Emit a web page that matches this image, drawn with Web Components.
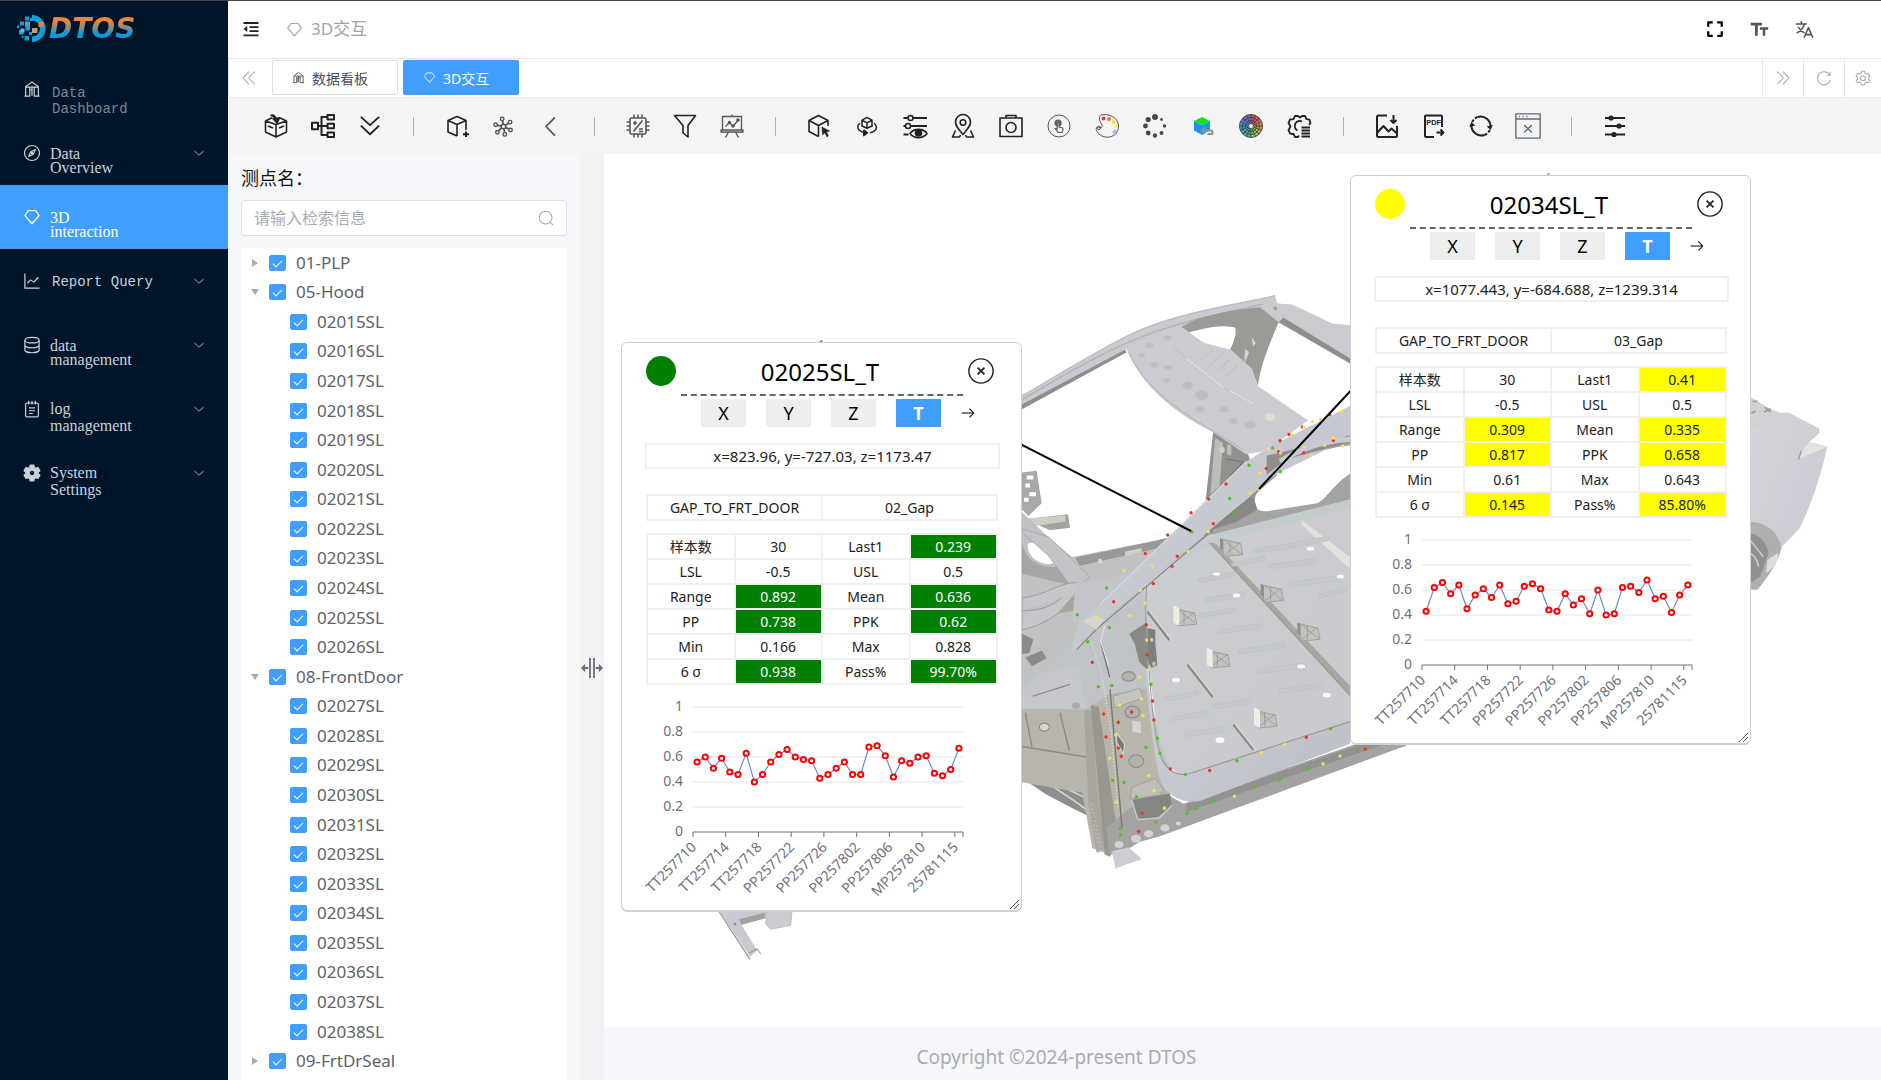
<!DOCTYPE html>
<html lang="zh-CN">
<head>
<meta charset="utf-8">
<meta name="viewport" content="width=device-width, initial-scale=1">
<title>DTOS</title>
<style>
html,body{margin:0;height:100%}
body{font-family:"Noto Sans","Noto Sans CJK SC",sans-serif;font-size:16px;color:#222;background:#fff;
--blue:#409eff;--navy:#001529;--line:#e4e7ed;--panel:#f5f7fa;--muted:#a8abb2;--text:#606266}
</style>
</head>
<body>
<dtos-app></dtos-app>
<script>
class Base extends HTMLElement{
  constructor(){super();this.attachShadow({mode:'open'});}
  render(css,html){this.shadowRoot.innerHTML='<style>*{box-sizing:border-box}button{font:inherit;border:0;background:none;padding:0;color:inherit;cursor:pointer}'+css+'</style>'+html;}
}

/* ---------- icons, all on a 24 x 24 grid ---------- */
const ICONS={
fold:'<g stroke-width="2.6"><path d="M2 4h20M10 9.5h12M10 14.8h12M2 20.5h20"/></g><path d="M2 12l5-4v8z" fill="currentColor" stroke="none"/>',
diamond:'<path d="M7 3.5h10l4.5 6.5L12 21 2.500 10z"/>',
bank:'<path d="M3.500 21.500V9L12 2.500 20.500 9v12.500M2 21.500h7V13h2.500M22 21.500h-7V11M3.500 9.500h17M9 21V10M15 10v4M12 10v11"/>',
compass:'<circle cx="12" cy="12" r="10"/><path d="M16.500 7.500l-2.800 6.200-6.200 2.800 2.800-6.200z"/><circle cx="12" cy="12" r=".8"/>',
trend:'<path d="M2.500 2v19.500H22M6 15l4-4.500 4.500 3 6-6.500"/>',
db:'<ellipse cx="12" cy="5.500" rx="9.500" ry="3.700"/><path d="M2.500 5.500v13c0 2 4 3.800 9.500 3.800s9.500-1.800 9.500-3.800v-13M2.500 12c0 2 4 3.800 9.500 3.800s9.500-1.800 9.500-3.800"/>',
note:'<rect x="3.500" y="4" width="17" height="18.500" rx="2"/><path d="M7.500 1v5M12 1v5M16.500 1v5M8 10.500h8M8 14.300h8M8 18h5"/>',
gear:'<path fill="currentColor" fill-rule="evenodd" d="M9.500 1.500h5l.6 3 2 1.100 2.900-1 2.500 4.300-2.300 2v2.200l2.300 2-2.500 4.300-2.900-1-2 1.100-.6 3h-5l-.6-3-2-1.100-2.900 1-2.500-4.300 2.300-2v-2.200l-2.300-2L4 4.600l2.900 1 2-1.100zM12 8.200a3.800 3.800 0 100 7.600 3.800 3.800 0 000-7.600z"/>',
gearline:'<path d="M9.800 2h4.400l.8 3 2.200 1.200 3-.8 2.200 3.800L20.200 11.400v1.800l2.200 2.200-2.200 3.800-3-.8L15 19.600l-.8 3H9.800l-.8-3-2.200-1.200-3 .8-2.200-3.800 2.200-2.200v-1.800L1.600 9.200 3.800 5.400l3 .8L9 5z"/><circle cx="12" cy="12.200" r="3.600"/>',
down:'<path d="M3 8l9 8.500L21 8" stroke-width="2"/>',
full:'<g stroke-width="3"><path d="M3 9V3h6M15 3h6v6M21 15v6h-6M9 21H3v-6"/></g>',
font:'<path fill="currentColor" stroke="none" d="M1 3.500h14v3.300H9.800V20H6.300V6.800H1zM12.500 9.200H23v3h-3.700V20h-3.200v-7.800h-3.600z"/>',
lang:'<g stroke-width="2"><path d="M1 5h14M8 1.500V5M4 8.500c2 4 5 6.500 8 8M12 5c-1 5-5 9-10 11.500M11.500 22.500L17 9.500l5.500 13M13.500 18.500h7"/></g>',
dleft:'<path d="M12 2.500L3 12l9 9.500M20.500 2.500l-9 9.500 9 9.500"/>',
dright:'<path d="M12 2.500l9 9.500-9 9.500M3.500 2.500l9 9.500-9 9.500"/>',
reload:'<path d="M20.500 7.500A9.800 9.800 0 1021.500 15M21 2.500v5.500h-5"/>',
search:'<circle cx="11.500" cy="11.500" r="9.500"/><path d="M18.500 18.500l4 4"/>',
boxin:'<path d="M12 10.500L1.500 7v11L12 23l10.500-5V7zM12 10.500V23M1.500 7L8 3.800M22.500 7L15 3.500M4 12l5 2M20 12l-5 2"/><path d="M6.500 1.500c3-1 5 0 5.500 4M9 4.500l4 4.500 2.500-5z" fill="currentColor"/>',
tree:'<g stroke-width="2"><path d="M7 12h10M10.500 12V3h6M10.500 12v9h6"/><rect x="1" y="8.800" width="6" height="6.400"/><rect x="16.500" y="1" width="6.500" height="4.600"/><rect x="16.500" y="9.700" width="6.500" height="4.600"/><rect x="16.500" y="18.400" width="6.500" height="4.600"/></g>',
ddown:'<g stroke-width="2"><path d="M2 2l10 9 10-9M2 11.500l10 9.500 10-9.500"/></g>',
boxplus:'<path d="M12 22L3 18V6.500l9-4 9 4V16M3 6.500l9 4 9-4M12 10.500V22"/><path d="M21 17.500v5.500M18 20.200h6" stroke-width="2"/>',
net:'<circle cx="12" cy="12" r="2.600"/><circle cx="10.500" cy="3.500" r="2"/><circle cx="19.500" cy="7" r="2"/><circle cx="20" cy="16" r="2"/><circle cx="13.500" cy="21" r="2"/><circle cx="5" cy="18.500" r="2"/><circle cx="3" cy="10" r="2"/><path d="M11.700 9.500l-.8-4M14.200 10.500l3.500-2.300M14.500 13l3.800 2.200M12.600 14.500l.6 4.500M9.800 13.500l-3.300 3.500M9.500 11.500L5 10.500" stroke-width="2"/>',
left:'<g stroke-width="2"><path d="M17 1.500L7 12l10 10.500"/></g>',
chip:'<rect x="4" y="4" width="16" height="16" rx="1.500"/><path d="M8 4V.5M12 4V.5M16 4V.5M8 23.500V20M12 23.500V20M16 23.500V20M4 8H.5M4 12H.5M4 16H.5M23.500 8H20M23.500 12H20M23.500 16H20M16.500 6.500l-9 11M7 9h4M9 7v4M13 15h4M13 17.500h4"/>',
filter:'<path d="M1.500 1.500h21l-7.500 10V23l-5-4v-7.500z"/>',
board:'<path d="M2.500 2.500h19v13.500h-19zM1 16h22v2H1zM12 .5v2M8.500 18L5.500 23.500M15.500 18l3 5.500M5.500 12.500l4-4 3.500 3.500 5.500-6" stroke-width="1.300"/><circle cx="9.500" cy="8.500" r="1"/><circle cx="13" cy="12" r="1"/><circle cx="18" cy="6" r="1"/>',
boxcur:'<path d="M11.500 22.500L2 17.500V6.500l9.500-5 9.500 5V12M2 6.500l9.500 5 9.500-5M11.500 11.500v11"/><path d="M15 13l7.500 4-3 1 2 4-1.600.8-2-4-2.400 2z" fill="currentColor" stroke-width=".6"/>',
boxrot:'<path d="M12 14.500L6.500 12V5.500L12 2.500l5.500 3V12zM6.500 5.500l5.500 3 5.500-3M12 8.500v6M4.500 9C0 12 1.500 18 10 19.500M19.500 9c5 3.500 3 9-4.500 10.500"/><path d="M8.500 16.500l4 3-4 3z" fill="currentColor"/>',
slidereye:'<path d="M.5 4h5M10 4h14M.5 12h2M8 12h16M.5 20.500h5" stroke-width="2"/><circle cx="7.500" cy="4" r="2.500"/><circle cx="5" cy="12" r="2.500"/><path d="M7 19.500c4-5.500 13-5.500 17 0-4 5.500-13 5.500-17 0z"/><circle cx="15.500" cy="19" r="3" fill="currentColor"/>',
pin:'<path d="M12 20.500C7 14.500 4.500 12 4.500 8a7.500 7.500 0 0115 0c0 4-2.500 6.500-7.500 12.500z"/><circle cx="12" cy="8.500" r="2.800"/><path d="M4.500 16.500L1.500 23h7l1-2M19.500 16.500l3 6.500h-7l-1-2"/>',
camera:'<path d="M1 4h22v18.500H1zM7 4V1.500h10V4"/><circle cx="12" cy="13.500" r="5"/>',
touch:'<g stroke-width="1"><circle cx="12" cy="12" r="11"/></g><circle cx="11" cy="9" r="3" fill="#777" stroke-width="1.200"/><path d="M10.200 8.500a.9.900 0 011.800 0V13l3.800 1c.6 2-.2 3.500-.8 4.500h-4l-2.800-4 2 .5z" fill="#f4f4f4" stroke-width="1.200"/>',
palette:'<path stroke="#555" stroke-width="1" d="M6 .8C14-.5 23 3 23.500 12c0 8-6 11-11 11.200C6.500 23.200 3 19.500 1.500 16.500c-1-3 .8-4 2.500-3 3 1.500 4-1.500 2.500-3.500C4.500 7.500 3.500 3 6 .8z"/><circle cx="3.800" cy="14" r="1.700" stroke="#555" stroke-width="1"/><g stroke="none"><circle cx="8.500" cy="4.500" r="1.900" fill="#f33"/><circle cx="14" cy="5" r="1.900" fill="#f63"/><circle cx="18.500" cy="8" r="1.900" fill="#fd3"/><circle cx="20.500" cy="12.500" r="1.700" fill="#ef5"/><circle cx="19.500" cy="17.500" r="1.900" fill="#a9b4ff"/></g>',
dots:'<g fill="#414b57" stroke="none"><circle cx="12" cy="3" r="3"/><circle cx="5.200" cy="5.500" r="2.600"/><circle cx="2.500" cy="12" r="2.400"/><circle cx="5.200" cy="19" r="2.400"/><circle cx="12" cy="21.500" r="2.200"/><circle cx="18.500" cy="19" r="2"/><circle cx="21.500" cy="12" r="1.700"/><circle cx="18.500" cy="5.500" r="1.400"/></g>',
cube:'<g stroke="none"><path d="M3 7l8-4 8 4-8 4.500z" fill="#14e01c"/><path d="M3 7v9.500l8 4.500V11.500z" fill="#1e8ff0"/><path d="M19 7v9l-8 5V11.500z" fill="#1699e8"/></g><path d="M11 16.500h8.500a2 2 0 012 2v1.500h-5M14 13.500l-3.500 3 3.500 3" stroke="#8b8f94" stroke-width="2"/>',
wheel:'<g stroke="none"><path d="M12 12V.5A11.500 11.500 0 0122 6.200z" fill="#e2504a"/><path d="M12 12L22 6.200a11.500 11.500 0 010 11.600z" fill="#e98a3b"/><path d="M12 12l10 5.800A11.500 11.500 0 0112 23.500z" fill="#a9c34b"/><path d="M12 12v11.500A11.500 11.500 0 012 17.800z" fill="#3fb58a"/><path d="M12 12L2 17.800A11.500 11.500 0 012 6.200z" fill="#3d95cf"/><path d="M12 12L2 6.200A11.500 11.500 0 0112 .5z" fill="#8a62c4"/></g><g stroke="#39434d" stroke-width=".9"><circle cx="12" cy="12" r="11.500"/><circle cx="12" cy="12" r="8.500"/><circle cx="12" cy="12" r="5.500"/><path d="M12 .5v23M.5 12h23M4 4l16 16M20 4L4 20M7.500 1.500l9 21M16.500 1.500l-9 21M1.500 7.500l21 9M1.500 16.500l21-9"/></g><circle cx="12" cy="12" r="2" fill="#fff" stroke="none"/>',
gearlist:'<path d="M12 21.500l-1 1.500H8l-1.500-3-3.500-.5L1.500 16l2-3.500L1.500 9 3 5.500l3.500-.3L8 2h3l2 1.500L15 2h3l1.500 3.200 3 .5 1 3.500-1.500 1.800M15 7.500a5 5 0 10-4.500 9" stroke-width="1.800"/><path d="M14.500 13.500H23M14.500 16.500H23M14.500 19.500H23M14.500 22.500H23" stroke-width="1.800"/>',
imgdown:'<path d="M12 1.500H3.500A1.500 1.500 0 002 3v18.500A1.500 1.500 0 003.500 23h17a1.500 1.500 0 001.500-1.500V12M2 19l6.500-7 5 5.500 3-3 5.500 5" stroke-width="2"/><path d="M18.500 1v7.500M15.500 6l3 3 3-3" stroke-width="2"/>',
pdf:'<path d="M20 13V2.500a1 1 0 00-1-1H4a1 1 0 00-1 1V22a1 1 0 001 1h8M14.500 18.500H21M18.500 15.500l3 3-3 3" stroke-width="2"/><text x="4.200" y="11.300" font-size="7.500" font-weight="700" font-family="Liberation Sans" fill="currentColor" stroke="none">PDF</text>',
sync:'<path d="M8.500 3A10 10 0 0121.500 13.500M15.500 21A10 10 0 012.500 10.500" stroke-width="2"/><path d="M8.500 3A10 10 0 003 8.500M15.500 21a10 10 0 005.500-5.500" stroke-width="2" stroke-dasharray="3 1.500"/><path d="M.3 13l2-5 4 3.500zM23.700 11l-2 5-4-3.500z" fill="currentColor" stroke="none"/>',
winx:'<g stroke="#5d6b78" stroke-width="1.300"><path d="M.8.8h22.400v22.400H.8zM.8 5.500h22.400M3.500 3.200h1M7 3.200h1M10.500 3.200h1M8.500 11l7 7M15.500 11l-7 7"/></g>',
sliders:'<g stroke-width="2"><path d="M2 4h20M2 12h20M2 20.500h20"/></g><g fill="currentColor"><circle cx="8" cy="4" r="1.800"/><circle cx="16" cy="12" r="1.800"/><circle cx="11" cy="20.500" r="1.800"/></g>',
close:'<circle cx="12" cy="12" r="11.200" stroke-width="1.300"/><path d="M8.800 8.800l6.400 6.400M15.200 8.800l-6.400 6.400"/>',
arrow:'<path d="M1 12h21M14.500 4.500L22 12l-7.500 7.500" stroke-width="1.800"/>',
split:'<g stroke-width="2"><path d="M9.800 1v22M14.200 1v22M1 12h7M23 12h-7"/></g><path d="M0 12l4.500-4.500v9zM24 12l-4.500-4.500v9z" fill="currentColor" stroke="none"/>'
};
customElements.define('ui-icon',class extends Base{
  connectedCallback(){
    this.render(':host{display:inline-flex;flex:none;width:var(--size,24px);height:var(--size,24px)}svg{width:100%;height:100%;overflow:visible}',
    `<svg viewBox="0 0 24 24" fill="none" stroke="currentColor" stroke-width="1.6" stroke-linejoin="round" aria-hidden="true">${ICONS[this.getAttribute('name')]||''}</svg>`);
  }
});

/* ---------- sidebar ---------- */
customElements.define('brand-logo',class extends Base{
  connectedCallback(){
    this.render(`:host{display:flex;align-items:center;gap:3px;height:57px;padding-left:17px}
    svg{width:29px;height:29px}
    span{font:italic bold 28px/30px "DejaVu Sans",sans-serif;background:linear-gradient(#e8843c 25%,#8c8d80 45%,#0f9ad6 65%);-webkit-background-clip:text;background-clip:text;color:transparent}`,
    `<svg viewBox="0 0 29 29"><path d="M15 1a13.500 13.500 0 010 27v-5.500a8 8 0 000-16z" fill="#129fdc"/>
    <g fill="#129fdc"><rect x="8" y="2.500" width="4" height="4"/><rect x="3" y="7.500" width="4" height="4"/><rect x="8.500" y="12" width="4.500" height="4.500"/><rect x="2" y="16" width="4.500" height="4.500"/><rect x="7.500" y="22" width="4.500" height="4.500"/><rect x="0" y="11.500" width="2.500" height="2.500"/><rect x="12" y="18" width="3" height="3"/><rect x="4.500" y="22" width="2" height="2"/><rect x="13" y="4" width="3" height="3"/></g>
    <rect x="8" y="7.500" width="5" height="5" fill="#5c9ea3"/><rect x="3.500" y="14.500" width="4" height="4" fill="#66b9d8"/><rect x="15" y="14" width="5.500" height="5" fill="#c79a75"/><rect x="21.500" y="8" width="5.500" height="5" fill="#ee8237"/></svg><span>DTOS</span>`);
  }
});
customElements.define('nav-item',class extends Base{
  connectedCallback(){
    const on=this.hasAttribute('active'),sub=this.hasAttribute('sub');
    this.render(`:host{display:block}
    a{display:flex;align-items:flex-start;height:64px;padding:0 23px 0 23px;color:#c9d2dc;text-decoration:none;font:16px/14px "Liberation Serif",serif;${on?'background:var(--blue);color:#fff;':''}}
    ui-icon{--size:18px;margin-top:23px}
    span{flex:1;padding:26px 0 0 9px}
    :host([mono]) span{font:14px/16px "Liberation Mono",monospace;padding:25px 0 0 11px}
    :host([dim]) span{color:#7a8896;padding-top:28px}
    :host([loose]) span{line-height:17px;padding-top:23px}
    .chev{--size:12px;margin-top:26px;color:#aab5c1}`,
    `<a href="#" ${on?'aria-current="page"':''}><ui-icon name="${this.getAttribute('icon')}"></ui-icon><span><slot></slot></span>${sub?'<ui-icon class="chev" name="down"></ui-icon>':''}</a>`);
  }
});
customElements.define('side-nav',class extends Base{
  connectedCallback(){
    this.render(':host{display:block;background:var(--navy)}nav{display:flex;flex-direction:column}',
    `<brand-logo></brand-logo><nav>
    <nav-item icon="bank" mono dim>Data<br>Dashboard</nav-item>
    <nav-item icon="compass" sub>Data<br>Overview</nav-item>
    <nav-item icon="diamond" active>3D<br>interaction</nav-item>
    <nav-item icon="trend" mono sub>Report Query</nav-item>
    <nav-item icon="db" sub>data<br>management</nav-item>
    <nav-item icon="note" sub loose>log<br>management</nav-item>
    <nav-item icon="gear" sub loose>System<br>Settings</nav-item></nav>`);
  }
});

/* ---------- header, tabs, tools ---------- */
customElements.define('top-bar',class extends Base{
  connectedCallback(){
    this.render(`:host{display:flex;align-items:center;height:59px;box-sizing:border-box;padding:0 67px 0 14px;border-bottom:1px solid var(--line)}
    button{display:flex}.crumb{display:flex;align-items:center;gap:8px;margin-left:26px;color:#a0a3a9;font-size:17px;line-height:24px;--size:17px;flex:1}
    .fold{--size:18px}.right{display:flex;gap:26px;color:#555;--size:19px}.right button:first-child{color:#000;--size:18px}`,
    `<button class="fold" aria-label="fold"><ui-icon name="fold"></ui-icon></button>
    <div class="crumb"><ui-icon name="diamond"></ui-icon><span>3D交互</span></div>
    <div class="right"><button aria-label="fullscreen"><ui-icon name="full"></ui-icon></button><button aria-label="font size"><ui-icon name="font"></ui-icon></button><button aria-label="language"><ui-icon name="lang"></ui-icon></button></div>`);
  }
});
customElements.define('tab-strip',class extends Base{
  connectedCallback(){
    this.render(`:host{display:flex;height:39px;box-sizing:border-box;border-bottom:1px solid var(--line);color:var(--muted)}
    .edge{display:flex;align-items:center;justify-content:center;width:41px;border-left:1px solid var(--line);--size:16px}
    .edge:first-child{width:44px;border-left:0;border-right:1px solid var(--line)}.edge:last-child{width:37px}
    .tabs{flex:1;display:flex;align-items:flex-start;gap:5px;padding:1px 0 0 3px}
    .tab{display:flex;align-items:center;gap:7px;height:35px;padding:0 29px 0 19px;border:1px solid #dcdfe6;border-radius:2px;font-size:14px;color:#495060;--size:13px}
    .tab.on{background:var(--blue);border-color:var(--blue);color:#fff}`,
    `<button class="edge" aria-label="previous"><ui-icon name="dleft"></ui-icon></button>
    <div class="tabs" role="tablist"><button class="tab" role="tab"><ui-icon name="bank"></ui-icon>数据看板</button><button class="tab on" role="tab" aria-selected="true"><ui-icon name="diamond"></ui-icon>3D交互</button></div>
    <button class="edge" aria-label="next"><ui-icon name="dright"></ui-icon></button><button class="edge" aria-label="refresh"><ui-icon name="reload"></ui-icon></button><button class="edge" aria-label="settings"><ui-icon name="gearline"></ui-icon></button>`);
  }
});
customElements.define('tool-bar',class extends Base{
  connectedCallback(){
    const groups=[['boxin','tree','ddown'],['boxplus','net','left'],['chip','filter','board'],
      ['boxcur','boxrot','slidereye','pin','camera','touch','palette','dots','cube','wheel','gearlist'],['imgdown','pdf','sync','winx'],['sliders']];
    this.render(`:host{display:flex;align-items:center;height:56px;padding-left:24px;background:#f4f4f4;color:#222}
    .group{display:flex}button{width:47px;height:40px;display:flex;align-items:center;justify-content:center}
    .wide button{width:48px}i{width:40px;display:flex;justify-content:center}i::before{content:"";width:1px;height:19px;background:#b0b0b0}
    [data-k=winx]{--size:26px}[data-k=boxrot],[data-k=ddown]{--size:22px}[data-k=net],[data-k=left]{--size:21px;color:#555}[data-k=board],[data-k=touch],[data-k=chip]{color:#555}`,
    groups.map((g,n)=>`<div class="group ${n==3?'wide':''}">${g.map(k=>`<button data-k="${k}" aria-label="${k}"><ui-icon name="${k}"></ui-icon></button>`).join('')}</div>`).join('<i></i>'));
  }
});

/* ---------- point tree ---------- */
customElements.define('tree-row',class extends Base{
  connectedCallback(){
    const leaf=this.hasAttribute('leaf'),open=this.hasAttribute('open');
    this.render(`:host{display:flex;align-items:center;min-height:26px;color:var(--text);font-size:17px;line-height:24px}
    .tw{width:28px;display:flex;justify-content:center;${leaf?'width:49px;visibility:hidden;':''}}
    .tw::before{content:"";border:4px solid transparent;border-left:6px solid #a8abb2;border-right:0}
    .tw.open::before{border:4px solid transparent;border-top:6px solid #a8abb2;border-bottom:0}
    label{display:flex;align-items:center;gap:10px}
    input{appearance:none;margin:0;width:17px;height:16px;border-radius:2px;background:#fff;border:1px solid #dcdfe6;display:flex;justify-content:center}
    input:checked{background:var(--blue);border-color:var(--blue)}
    input:checked::after{content:"";width:4px;height:8px;margin-top:2px;border:solid #fff;border-width:0 1px 1px 0;transform:rotate(45deg);box-sizing:content-box}`,
    `<button class="tw ${open?'open':''}" aria-label="toggle"></button><label><input type="checkbox" checked><slot></slot></label>`);
  }
});
customElements.define('point-panel',class extends Base{
  connectedCallback(){
    const leafs=(a,b)=>{let s='';for(let i=a;i<=b;i++)s+=`<tree-row leaf>0${i}SL</tree-row>`;return s;};
    this.render(`:host{display:flex;flex-direction:column;background:var(--panel);padding:10px 13px 0 13px;min-height:0;box-sizing:border-box}
    label{font-size:18px;line-height:28px;color:#111}
    .box{display:flex;align-items:center;height:36px;margin:8px 0 12px;padding:0 12px 0 12px;background:#fff;border:1px solid #dcdfe6;border-radius:4px;color:var(--muted);--size:16px}
    input{flex:1;min-width:0;border:0;outline:0;background:none;font:inherit;padding:0;color:var(--text)}input::placeholder{color:var(--muted)}
    .tree{flex:1;display:grid;grid-auto-rows:1fr;background:#fff;padding-bottom:4px}`,
    `<label for="q">测点名：</label><div class="box"><input id="q" placeholder="请输入检索信息"><ui-icon name="search"></ui-icon></div>
    <div class="tree" role="tree"><tree-row>01-PLP</tree-row><tree-row open>05-Hood</tree-row>${leafs(2015,2026)}<tree-row open>08-FrontDoor</tree-row>${leafs(2027,2038)}<tree-row>09-FrtDrSeal</tree-row></div>`);
  }
});
customElements.define('split-handle',class extends Base{
  connectedCallback(){
    this.render(':host{display:flex;align-items:center;justify-content:center;box-sizing:border-box;padding-top:102px;background:#f2f2f5;border:solid #f8f4dc;border-width:0 1px;color:#66707d;--size:22px;cursor:col-resize}','<ui-icon name="split"></ui-icon>');
  }
});

/* ---------- measurement card ---------- */
customElements.define('trend-chart',class extends Base{
  connectedCallback(){
    const v=this.getAttribute('values').split(',').map(Number),n=v.length,x0=48,w=270,y0=142,h=125,px=i=>x0+w*(i+.5)/n,py=q=>y0-h*q;
    const labels=['TT257710','TT257714','TT257718','PP257722','PP257726','PP257802','PP257806','MP257810','25781115'];
    let s='';
    for(let k=0;k<=5;k++){const y=y0-h*k/5;
      if(k)s+=`<path d="M${x0} ${y}h${w}" stroke="#e0e6f1"/>`;
      s+=`<text x="38" y="${y+4}" text-anchor="end">${+(k/5).toFixed(1)}</text>`;}
    s+=`<path d="M${x0} ${y0}h${w}v5" stroke="#6e7079" fill="none"/>`;
    labels.forEach((l,i)=>{s+=`<path d="M${x0+w*i*4/n} ${y0}v5" stroke="#6e7079"/><text transform="translate(${px(i*4)} ${y0+16}) rotate(-45)" text-anchor="end">${l}</text>`;});
    s+=`<polyline points="${v.map((q,i)=>px(i)+','+py(q)).join(' ')}" fill="none" stroke="#7088d4" stroke-width="1.200"/>`;
    s+=v.map((q,i)=>`<circle cx="${px(i)}" cy="${py(q)}" r="2.600" fill="#fff" stroke="#f00" stroke-width="2"/>`).join('');
    this.render(':host{display:block}svg{display:block;width:100%;overflow:visible}text{font-size:14px;fill:#6e7079}',`<svg viewBox="0 0 355 215">${s}</svg>`);
  }
});
customElements.define('measure-card',class extends Base{
  connectedCallback(){
    const a=k=>this.getAttribute(k),v=a('stats').split(','),k=['样本数','Last1','LSL','USL','Range','Mean','PP','PPK','Min','Max','6 σ','Pass%'],mark=[1,4,5,6,7,10,11];
    let rows='';for(let i=0;i<12;i+=2)rows+='<tr>'+[i,i+1].map(j=>`<th scope="row">${k[j]}</th><td class="${mark.includes(j)?'m':''}">${v[j]}</td>`).join('')+'</tr>';
    this.render(`:host{display:block;width:401px;padding:11px 21px 0 23px;background:#fff;border:1px solid #d0d0d0;border-radius:6px;box-sizing:border-box;color:#222;font-size:14px;border-bottom-width:2px}
    header{display:flex;align-items:flex-start;padding:0 6px 0 1px}
    .state{width:30px;height:30px;border-radius:50%;background:var(--state);margin-top:2px}
    h2{flex:1;margin:0 5px;padding:0 4px 4px 0;font-size:24px;line-height:36px;font-weight:400;text-align:center;border-bottom:2px dashed #666;color:#000}
    header button{display:flex;margin-top:4px;--size:26px}
    .axes{display:flex;align-items:center;gap:20px;margin:3px 0 16px 56px}
    .axes button{width:45px;height:28px;background:#eee;font-size:18px;line-height:28px;color:#000}
    .axes .on{background:var(--blue);color:#fff;font-weight:700}.axes .go{width:auto;background:none;display:flex;align-items:center;--size:14px}
    .pos{line-height:22px;border:2px solid #f0f0f0;text-align:center;font-size:15px}
    table{width:calc(100% - 3px);table-layout:fixed;border-collapse:collapse;margin:12px 0 0 1px;color:#222}
    .pair{margin-top:25px}
    th,td{font-weight:400;text-align:center;padding:0;height:25px;line-height:20px;border:2px solid #f0f0f0}
    .m{background:var(--state);color:var(--ink)}
    trend-chart{margin-top:5px}
    .grip{display:flex;justify-content:flex-end;margin:-5px -20px 0 0}.grip svg{width:10px;height:10px}`,
    `<header><span class="state"></span><h2>${a('name')}</h2><button aria-label="close"><ui-icon name="close"></ui-icon></button></header>
    <div class="axes"><button>X</button><button>Y</button><button>Z</button><button class="on">T</button><button class="go" aria-label="next"><ui-icon name="arrow"></ui-icon></button></div>
    <div class="pos">${a('pos')}</div>
    <table class="pair"><tr><td>GAP_TO_FRT_DOOR</td><td>${a('gap')}</td></tr></table>
    <table>${rows}</table>
    <trend-chart values="${a('values')}"></trend-chart>
    <div class="grip"><svg viewBox="0 0 10 10" stroke="#555"><path d="M0 9l9-9M4 9l5-5"/></svg></div>`);
  }
});

/* ---------- 3D viewport ---------- */
const RED=[[989,366],[907,397],[867,416],[840,432],[836,460],[911,462],[1000,431],[799,502],[678,541],[626,579],[573,614],[503,670],[640,642],[436,717],[532,724],[516,749],[460,793],[341,839],[439,897],[441,973],[277,992],[458,1090],[462,1138],[311,1123],[395,1118],[355,1144],[318,1181],[355,1209],[364,1230],[511,1262],[629,1266],[919,1182],[1096,1212],[427,1374],[416,1420]];
const GRN=[[818,450],[747,494],[841,510],[689,578],[700,612],[575,662],[320,804],[232,872],[328,904],[263,940],[453,1048],[295,1054],[336,1051],[472,1184],[438,1207],[480,1223],[556,1276],[711,1241],[992,1160],[1071,1216],[924,1261],[838,1290],[762,1309],[643,1343],[590,1361],[561,1374],[468,1396],[338,1291],[372,1296],[410,1332],[360,1413],[361,1429]];
const YEL=[[1025,357],[962,378],[938,384],[912,398],[876,417],[805,453],[841,463],[913,447],[974,443],[1000,425],[1028,445],[934,468],[779,514],[749,564],[778,556],[625,662],[565,712],[456,748],[372,760],[421,810],[436,842],[389,874],[293,877],[440,936],[446,1011],[418,1030],[424,1085],[359,1100],[429,1127],[347,1176],[329,1235],[446,1279],[462,1317],[349,1346],[493,1361],[703,1331],[784,1221],[854,1200],[969,1249],[1020,1229]];
customElements.define('body-model',class extends Base{
  connectedCallback(){
    const pts=(a,c)=>a.map(p=>`<ellipse cx="${p[0]}" cy="${p[1]}" rx="5" ry="4.500" fill="${c}"/>`).join('');
    const clip=(x,y,l)=>`<g transform="translate(${x} ${y})"><path d="M0-20l62 12 8 30-58 6z" fill="#c2c2c1"/><path d="M2-18l60 12 6 28-56 4zM14-14l50 34M60-8L14 22M30-12v34" fill="none" stroke="#85857f" stroke-width="1.500"/>${l?'<path d="M-2-26l18 8v44l-18-8z" fill="#efece2"/>':'<path d="M0-20l10 4v28l-10-6z" fill="#8f8f8b"/>'}</g>`;
    const bead=(x,y,w)=>`<path d="M${x} ${y}l${w}-16q14 4 0 12l-${w} 14q-14-4 0-10z" fill="#c5c8cc" stroke="#bbbdc0" stroke-width="1.500"/>`;
    this.render(':host{display:block}svg{display:block;width:100%;height:100%}',
`<svg viewBox="604 154 1277 873" role="img" aria-label="body in white">
<defs><linearGradient id="p" x1="0" y1="0" x2="1" y2="1"><stop offset="0" stop-color="#cdcfd5"/><stop offset=".6" stop-color="#c5c7cf"/><stop offset="1" stop-color="#bbbdc5"/></linearGradient>
<linearGradient id="f" x1="0" y1="0" x2="1" y2="1"><stop offset="0" stop-color="#c9ced1"/><stop offset=".4" stop-color="#cbccd0"/><stop offset="1" stop-color="#c8c9ce"/></linearGradient>
<linearGradient id="w" x1="0" y1="0" x2="1" y2="1"><stop offset="0" stop-color="#d5d5da"/><stop offset=".6" stop-color="#cdced5"/><stop offset="1" stop-color="#c9ced0"/></linearGradient></defs>
<g transform="translate(1000 270) scale(.33333 .39541)" stroke-linejoin="round">
<path d="M66 352L380 208 372 196 66 335z" fill="#8f8e88"/>
<path d="M66 318C180 262 290 205 385 165 520 110 680 92 825 65l7 20 45 2 120 48 53 4v98L835 132 780 96C650 100 560 130 545 148L400 190 66 340z" fill="#c9cbd0"/>
<path d="M66 328C200 260 330 200 400 178 520 132 680 108 790 86" fill="none" stroke="#b3b5ba" stroke-width="4"/>
<path d="M66 318C180 262 290 205 385 165 520 110 680 92 825 65" fill="none" stroke="#b9bbc1" stroke-width="3"/>
<path fill-rule="evenodd" d="M540 146C600 112 700 100 780 94l56 38c-30 60-54 110-62 160l-20-42-60-45-85-16zM566 158l50 30 74 14c12-20 26-56 10-58-50-6-90 4-134 14z" fill="#9b9a97"/>
<path d="M836 132l214 104v-12L850 120z" fill="#8f8e8a"/>
<path d="M735 200l12 8-14 30zM755 170l12 14-8 10z" fill="#d5d5d5"/>
<path d="M640 405l105 62 10 26-70 45-68 45z" fill="#92918e"/><path d="M645 425l24 12-10 110-28 20zM682 440l12 4v26l-14-4z" fill="#bdbdb7"/><path d="M680 478l50 8-40 34M700 520l60-40" stroke="#777" fill="none" stroke-width="3"/><circle cx="666" cy="455" r="8" fill="#ccc"/>
<path d="M378 196L540 142c30 12 50 36 80 44l72 16 64 48 18 44 150 86-126 78-60 8-100-56C520 360 420 290 378 196z" fill="#cbccd1"/>
<path d="M386 208C430 290 520 350 640 408l88 46" fill="none" stroke="#b4b6bb" stroke-width="3"/>
<path d="M520 190c60 60 150 110 240 150M600 230l40-30M625 244l40-30M650 256l40-30M675 270l40-30" fill="none" stroke="#b9bbbf" stroke-width="2.500"/><path d="M560 225l110 72M690 305l70 34" stroke="#e4e3dd" stroke-width="3"/>
<g fill="#bdbfc3"><ellipse cx="448" cy="190" rx="12" ry="7"/><ellipse cx="503" cy="172" rx="12" ry="7"/><ellipse cx="425" cy="216" rx="10" ry="6"/><ellipse cx="462" cy="240" rx="12" ry="7"/><ellipse cx="505" cy="246" rx="12" ry="6"/><ellipse cx="500" cy="280" rx="10" ry="6"/><ellipse cx="563" cy="292" rx="16" ry="10"/><ellipse cx="605" cy="316" rx="20" ry="12"/><ellipse cx="600" cy="352" rx="13" ry="7"/><ellipse cx="672" cy="352" rx="14" ry="8"/><ellipse cx="700" cy="382" rx="12" ry="7"/><ellipse cx="750" cy="392" rx="18" ry="10"/><ellipse cx="810" cy="372" rx="16" ry="10" fill="#dddcd6"/><circle cx="826" cy="97" r="5" fill="#999"/></g>
<path d="M66 512l44-4 15 82-40 32-19-16z" fill="#a9a9a7"/><path d="M80 520h20v10H80zM76 540h14v10H76zM88 562h20v10H88zM72 576h14v10H72z" fill="#fff"/>
<path d="M76 630l128-12 6 34-60 6z" fill="#a3a29e"/><path d="M76 630l120-10v16l-110 14z" fill="#cfcdc3"/>
<path fill-rule="evenodd" d="M0 612h66l80 64 70 50 254-42 170-34 410-100v300L480 960 66 1090H0zM84 692c-6 24 22 50 60 52l54-8c-20-30-70-56-114-44z" fill="#bfc1c3"/>
<path d="M225 728l245-44 170-36v18L460 706 240 748z" fill="#999996"/><circle cx="300" cy="736" r="6" fill="#ddd"/><path d="M375 712l50-8v10l-50 10z" fill="#cfcfcf"/>
<path d="M66 690c14 50 60 70 130 58l60 30-40 20-150-30z" fill="#a5a6a6"/>
<path d="M66 655l80 20 110 90 14 12-34 20-30-4-60-70-80-60z" fill="#c3c4c8" stroke="#9fa0a0" stroke-width="2"/>
<path d="M66 830c80-10 110-40 170-40l10 20c-60 60-120 90-180 100zM66 862c50 0 90-10 120-34" fill="#c6c7ca" stroke="#8f908e" stroke-width="2"/>
<path d="M172 868l60-56 12 24-20 26z" fill="#a9a69c"/><path d="M226 790l110-10 60-20 36 20-160 120-54-10z" fill="#c4c5ca"/>
<path d="M66 920l34 14-12 34-22 4zM76 980l50-18 14 20-44 20z" fill="#8c8b88"/>
<path fill-rule="evenodd" d="M630 672l140-130 280-118v170l-250 48zM764 590c0 14 16 20 36 20l150-20c30-10 40-40 100-76v-70c-110 8-220 62-270 110-12 12-16 24-16 36z" fill="#a3a4a4"/>
<path d="M764 590c0 14 16 20 36 20l150-20c30-10 40-40 100-76v-70c-110 8-220 62-270 110-12 12-16 24-16 36z" fill="#fff"/>
<path d="M640 642l120-70 12 34-60 30-80 22z" fill="#8a8986"/>
<path d="M425 800l205-130 420-90v564L580 1278q-70 6-100-66-28-140-42-306z" fill="url(#f)"/>
<path d="M560 712l100-46 390-84v20L640 690 540 740z" fill="#c3cbcf"/>
<path d="M905 632l145 94v30L905 644z" fill="#e3e1da"/><path d="M628 690l20 2 402 360v26z" fill="#aaa59e"/><path d="M628 690l422 386" stroke="#8c8883" stroke-width="2"/>
${[[770,705,120],[815,745,130],[870,790,140],[700,740,90],[880,690,100],[620,830,110],[600,870,100],[660,910,120],[720,960,130],[780,1010,130],[840,1060,120],[500,1080,90],[520,1130,100],[560,1170,110],[640,1100,110],[960,820,70],[600,780,100]].map(b=>bead(...b)).join('')}
<path d="M442 864l66 72M562 998l76 82M700 1150l60 64" stroke="#8d8a82" stroke-width="6"/><path d="M450 864l66 72M570 998l76 82M708 1150l60 64" stroke="#dcdad2" stroke-width="3"/>
<g fill="#fff"><ellipse cx="931" cy="705" rx="11" ry="5"/><ellipse cx="650" cy="769" rx="11" ry="4"/><ellipse cx="1021" cy="775" rx="11" ry="5"/><ellipse cx="709" cy="823" rx="11" ry="5"/><ellipse cx="903" cy="1003" rx="12" ry="5"/><ellipse cx="528" cy="1037" rx="12" ry="6"/><ellipse cx="980" cy="1075" rx="12" ry="6"/><ellipse cx="660" cy="1189" rx="13" ry="7"/></g>
${clip(660,698)}${clip(782,814)}${clip(892,912)}${clip(522,874,1)}${clip(622,980,1)}${clip(764,1132,1)}
<path d="M66 1235l200 70 10 80-50-20-90-40-70-40z" fill="#8f8f8c"/><path d="M66 1240c60 60 130 80 200 130M100 1272l150 60" stroke="#d5d5d5" stroke-width="4" fill="none"/>
<path d="M50 1045L210 950l60-30 50-30 110-90 10 100 6 160 34 130 20 50 20 30-30 60-100 60-60 50-44-14-24-110-6-60-206-30z" fill="#c1c4c7"/>
<path d="M50 1108l206 4 70-40 115-14 10 70 30 100 40 80-40 60-100 60-60 48-44-14-24-110-6-30-207-30z" fill="#b8b5ac"/>
<path d="M50 1075l76-55 110-20 20 108-206 2z" fill="#c6c7ca"/><path d="M98 1078l112-30" stroke="#888" stroke-width="3"/>
<path d="M66 1205l215 30M76 1120l20 85M180 1120l28 95" stroke="#8c8a84" stroke-width="4" fill="none"/><ellipse cx="133" cy="1156" rx="15" ry="10" fill="#d8d7d0" stroke="#888" stroke-width="3"/><ellipse cx="228" cy="1102" rx="12" ry="8" fill="#aaa"/>
<path d="M252 1112l24 4 14 180 24 170-24 8-24-110z" fill="#a9a6a0"/><path d="M272 1100l24 4 60 340-26 40-16-6z" fill="#9a9792"/><path d="M266 1360l34 110M274 1350l30 110" stroke="#bbb" stroke-width="5" stroke-dasharray="5 6"/>
<path d="M320 1410l100-70 40-20 50 10 40 20 650-190 40 36-760 236-60 14-70 36-24-8z" fill="#a3a3a1"/>
<path d="M560 1350l640-184v20L560 1370z" fill="#929290"/>
<path d="M398 1340l112-16 6 30-50 34-54 4z" fill="#858582"/><path d="M394 1340l20 50 64-4 38-32" fill="none" stroke="#c9c9c9" stroke-width="4"/><path d="M396 1308l70-22 24 28-10 14-90 10z" fill="#c1beb5" stroke="#999" stroke-width="2"/>
<path d="M436 790q-14 60 8 220 12 170 40 230 26 40 76 38l490-138v58L600 1343q-80 10-116-46-22-50-44-250-16-170-4-257z" fill="url(#p)"/>
<path d="M440 800q-8 80 8 220 14 170 40 220 26 40 72 36l490-134" fill="none" stroke="#9a9994" stroke-width="3"/>
<path d="M388 920l50-28 6 120-26-20-14-46z" fill="#898986"/><path d="M442 906l24 4v30l6 60-18 6-12-20z" fill="#7e7e7c"/><circle cx="455" cy="935" r="5" fill="#ccc"/><circle cx="462" cy="996" r="6" fill="#bbb"/>
<path d="M274 940l30 80 30 150 20 190" fill="none" stroke="#dad8d0" stroke-width="4" stroke-dasharray="4 4"/><path d="M303 945l26 85M330 1060l36 350" stroke="#77756f" stroke-width="4" fill="none"/><path d="M314 900l-12 40 24 60" stroke="#e6e4de" stroke-width="3" fill="none"/>
<g stroke="#8a8a86" stroke-width="3" fill="#b1b1ae"><ellipse cx="386" cy="1028" rx="20" ry="12"/><ellipse cx="397" cy="1118" rx="22" ry="15"/><ellipse cx="409" cy="1242" rx="22" ry="16"/></g><path d="M396 1140l26 2v30l-24-4z" fill="#d5d5d5"/><path d="M340 1078l80-20 8 24-84 26z" fill="#c6c4bb" stroke="#999" stroke-width="2"/><path d="M350 1170l24 30-4 24-20-30z" fill="#777" stroke="#ddd" stroke-width="3"/>
<g fill="#d2d3d5"><ellipse cx="357" cy="1453" rx="14" ry="9"/><ellipse cx="408" cy="1438" rx="15" ry="10"/><ellipse cx="446" cy="1426" rx="14" ry="9"/><ellipse cx="495" cy="1411" rx="14" ry="9"/><ellipse cx="535" cy="1400" rx="8" ry="5"/></g>
<path d="M336 1470l50-10 40 30-50 14-30 10z" fill="#cdced3"/>
<path d="M212 960l24-66 62-46L740 484l80-42 230-98v80l-220 92-170 120L290 900l-60 62z" fill="url(#p)"/>
<path d="M230 960l60-52L670 634l160-116" fill="none" stroke="#86847f" stroke-width="3"/><path d="M800 470l40-8 210-44v18l-190 42-60 40z" fill="#8f8e8a"/><path d="M840 484q100-52 210-56" stroke="#c9cbd0" stroke-width="14" fill="none"/>
<path d="M740 484L300 846" stroke="#d5d6da" stroke-width="4"/><path d="M250 888l30-14 34 10-26 26z" fill="#d6d5d2"/>
${pts(RED,'#f0332a')}${pts(GRN,'#4fc41f')}${pts(YEL,'#f0e25a')}
</g>
<g transform="translate(1720 370) scale(.33333)">
<path d="M80 76l70 40 30 12h28l90 48v14l-30 26 54 14c-20 90-50 180-84 246l-52 54c-10 50-60 110-76 130h-30z" fill="url(#w)"/>
<path d="M90 80l62 40 28 10-90 52z" fill="#d0d3d1"/><path d="M98 94h14M94 130l12-6M132 126l20-10M134 112l18 14" stroke="#a09c94" stroke-width="5"/>
<path d="M268 216l54 14-86 38 14-32z" fill="#e2e2e0"/><path d="M236 268l8-26" stroke="#999" stroke-width="4"/>
<path d="M90 456c50 0 84 30 94 74l-4 16c-14 50-50 90-66 112H90z" fill="#aeb0ae"/><path d="M90 490c30 4 50 30 56 60l-26 70-30 20z" fill="#8f908f"/><path d="M90 550q20 10 26 40M90 510l40 50" stroke="#c9c9c7" stroke-width="5" fill="none"/><path d="M142 570l32-22c4 20-10 44-36 62z" fill="#dbdce2"/>
</g>
<g transform="translate(570 640) scale(.33333)"><path d="M448 812h140v22l-74 20 48 78-22 18z" fill="#c8cacf"/><path d="M448 816l92 142" stroke="#999" stroke-width="4"/><path d="M508 838l76-20v18l-70 18z" fill="#a1a19e"/><path d="M588 812h78l-4 44-60 12-14-16z" fill="#cbccd1" stroke="#aaa" stroke-width="2"/><circle cx="495" cy="852" r="4" fill="#888"/><path d="M536 940l26-14 10 16" fill="none" stroke="#888" stroke-width="3"/></g>
<path d="M820 342L1191 531M1370 370L1259 489" stroke="#000" stroke-width="2"/><path d="M820 341h3M1547 174h3" stroke="#777" stroke-width="1"/>
</svg>`);
  }
});
customElements.define('model-viewer',class extends Base{
  connectedCallback(){
    this.render(`:host{display:block;position:relative;background:#fff;overflow:hidden;min-height:0}
    body-model{position:absolute;inset:0}
    measure-card{position:absolute}
    .a{left:17px;top:188px;--state:green;--ink:#fff}.b{left:746px;top:21px;--state:#ff0;--ink:#222}`,
    `<body-model></body-model>
    <measure-card class="a" name="02025SL_T" pos="x=823.96, y=-727.03, z=1173.47" gap="02_Gap" stats="30,0.239,-0.5,0.5,0.892,0.636,0.738,0.62,0.166,0.828,0.938,99.70%"
     values=".56,.60,.51,.59,.48,.46,.63,.40,.46,.56,.62,.66,.60,.58,.57,.43,.46,.51,.56,.46,.46,.68,.69,.61,.44,.57,.55,.60,.61,.47,.45,.50,.67"></measure-card>
    <measure-card class="b" name="02034SL_T" pos="x=1077.443, y=-684.688, z=1239.314" gap="03_Gap" stats="30,0.41,-0.5,0.5,0.309,0.335,0.817,0.658,0.61,0.643,0.145,85.80%"
     values=".43,.62,.66,.57,.64,.45,.56,.61,.54,.64,.49,.51,.63,.65,.61,.44,.43,.57,.48,.53,.41,.60,.40,.41,.62,.63,.58,.68,.53,.55,.42,.56,.64"></measure-card>`);
  }
});

/* ---------- page ---------- */
customElements.define('dtos-app',class extends Base{
  connectedCallback(){
    this.render(`:host{display:grid;position:relative;grid-template-columns:228px minmax(0,1fr);min-height:100vh}
    :host::before{content:"";position:absolute;inset:0 0 auto 0;height:1px;background:#444;z-index:2}
    main{display:flex;flex-direction:column;min-width:0}
    .work{flex:1;display:grid;grid-template-columns:352px 24px minmax(0,1fr);grid-template-rows:minmax(0,1fr) 53px}
    point-panel{grid-area:1/1/3/2;z-index:1}split-handle{grid-area:1/2/3/3;z-index:1}model-viewer{grid-area:1/3/2/4}
    footer{grid-area:2/1/3/4;display:flex;align-items:center;justify-content:center;padding:6px 0 0 4px;background:var(--panel);color:var(--muted);font-size:19px}`,
    `<side-nav></side-nav><main><top-bar></top-bar><tab-strip></tab-strip><tool-bar></tool-bar>
    <div class="work"><point-panel></point-panel><split-handle></split-handle><model-viewer></model-viewer><footer>Copyright ©2024-present DTOS</footer></div></main>`);
  }
});
</script>
</body>
</html>
